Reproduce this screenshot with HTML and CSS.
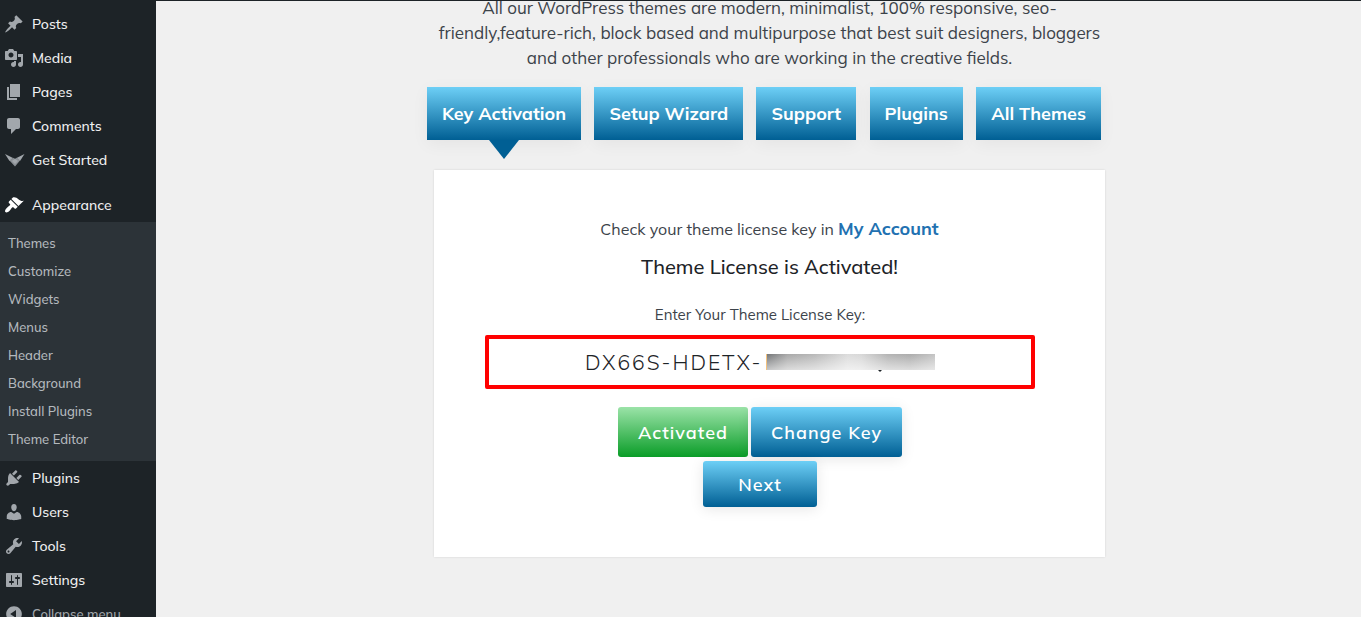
FILE: index.html
```
<!DOCTYPE html>
<html lang="en">
<head>
    <meta charset="UTF-8">
    <meta name="viewport" content="width=device-width, initial-scale=1.0">
    <title>Get Started</title>
    <link rel="stylesheet" href="styles.css">
</head>
<body>
    <nav class="admin-menu">
        <a href="#" class="menu-item">
            <svg viewBox="0 0 20 20"><path d="M10.44 3.02l1.82-1.82 6.36 6.35-1.83 1.82c-1.05-.68-2.48-.57-3.41.36l-.75.75c-.92.93-1.04 2.35-.35 3.41l-1.83 1.82-2.41-2.41-2.8 2.79c-.42.42-3.38 2.71-3.8 2.29s1.86-3.39 2.28-3.81l2.79-2.79L4.1 9.36l1.83-1.82c1.05.69 2.48.57 3.4-.36l.75-.75c.93-.92 1.05-2.35.36-3.41z"/></svg>
            <span>Posts</span>
        </a>
        <a href="#" class="menu-item">
            <svg viewBox="0 0 20 20"><path d="M13 11V4c0-.55-.45-1-1-1h-1.67L9 1H5L3.67 3H2c-.55 0-1 .45-1 1v7c0 .55.45 1 1 1h10c.55 0 1-.45 1-1zM7 4.5c1.38 0 2.5 1.12 2.5 2.5S8.38 9.5 7 9.5 4.5 8.38 4.5 7 5.62 4.5 7 4.5zM14 6h5v10.5c0 1.38-1.12 2.5-2.5 2.5S14 17.88 14 16.5s1.12-2.5 2.5-2.5c.17 0 .34.02.5.05V9h-3V6zm-4 8.05V13h2v3.5c0 1.38-1.12 2.5-2.5 2.5S7 17.88 7 16.5 8.12 14 9.5 14c.17 0 .34.02.5.05z"/></svg>
            <span>Media</span>
        </a>
        <a href="#" class="menu-item">
            <svg viewBox="0 0 20 20"><path d="M6 15V2h10v13H6zm-1 1h8v2H3V5h2v11z"/></svg>
            <span>Pages</span>
        </a>
        <a href="#" class="menu-item">
            <svg viewBox="0 0 20 20"><path d="M5 2h9c1.1 0 2 .9 2 2v7c0 1.1-.9 2-2 2h-2l-5 5v-5H5c-1.1 0-2-.9-2-2V4c0-1.1.9-2 2-2z"/></svg>
            <span>Comments</span>
        </a>
        <a href="#" class="menu-item">
            <svg viewBox="0 0 20 20"><path d="M1 4l8 4-3.500 3z"/><path d="M20.500 4l-8 4 3.500 3z"/><path d="M5.500 10.500L9 7.800l2 1 2-1 3 2.700-5 6z" fill="#8a8f94"/><path d="M8 11l3-2.200L14 11l-3 3z"/></svg>
            <span>Get Started</span>
        </a>
        <a href="#" class="menu-item current">
            <svg viewBox="0 0 20 20"><path d="M14.48 11.06L7.41 3.99l1.5-1.5c.5-.56 2.3-.47 3.51.32 1.21.8 1.43 1.28 2.91 2.1 1.18.64 2.45 1.26 4.45.85zm-.71.71L6.7 4.7 4.93 6.47c-.39.39-.39 1.02 0 1.41l1.06 1.06c.39.39.39 1.03 0 1.42-.6.6-1.43 1.11-2.21 1.69-.35.26-.7.53-1.01.84C1.43 14.23.4 16.08 1.4 17.07c.99 1 2.84-.03 4.18-1.36.31-.31.58-.66.85-1.02.57-.78 1.08-1.61 1.69-2.21.39-.39 1.02-.39 1.41 0l1.06 1.06c.39.39 1.02.39 1.41 0z"/></svg>
            <span>Appearance</span>
        </a>
        <div class="submenu">
            <a href="#">Themes</a>
            <a href="#">Customize</a>
            <a href="#">Widgets</a>
            <a href="#">Menus</a>
            <a href="#">Header</a>
            <a href="#">Background</a>
            <a href="#">Install Plugins</a>
            <a href="#">Theme Editor</a>
        </div>
        <a href="#" class="menu-item">
            <svg viewBox="0 0 20 20"><path d="M13.11 4.36L9.87 7.6 8 5.73l3.24-3.24c.35-.34 1.05-.2 1.56.32.52.51.66 1.21.31 1.55zm-8 1.77l.91-1.12 9.01 9.01-1.19.84c-.71.71-2.63 1.16-3.82 1.16H6.14L4.9 17.26c-.59.59-1.54.59-2.12 0-.59-.58-.59-1.53 0-2.12l1.24-1.24v-3.88c0-1.13.4-3.19 1.09-3.89zm7.26 3.97l3.24-3.24c.34-.35 1.04-.21 1.55.31.52.51.66 1.21.31 1.55l-3.24 3.25z"/></svg>
            <span>Plugins</span>
        </a>
        <a href="#" class="menu-item">
            <svg viewBox="0 0 20 20"><path d="M10 9.25c-2.27 0-2.73-3.44-2.73-3.44C7 4.02 7.82 2 9.97 2c2.16 0 2.98 2.02 2.71 3.81 0 0-.41 3.44-2.68 3.44zm0 2.57L12.72 10c2.39 0 4.52 2.33 4.52 4.53v2.49s-3.65 1.13-7.24 1.13c-3.65 0-7.24-1.13-7.24-1.13v-2.49c0-2.25 1.94-4.48 4.47-4.48z"/></svg>
            <span>Users</span>
        </a>
        <a href="#" class="menu-item">
            <svg viewBox="0 0 20 20"><path d="M16.68 9.77c-1.34 1.34-3.3 1.67-4.95.99l-5.41 6.52c-.99.99-2.59.99-3.58 0s-.99-2.59 0-3.57l6.52-5.42c-.68-1.65-.35-3.61.99-4.95 1.28-1.28 3.12-1.62 4.72-1.06l-2.89 2.89 2.82 2.82 2.86-2.87c.53 1.58.18 3.39-1.08 4.65zM3.81 16.21c.4.39 1.04.39 1.43 0 .4-.4.4-1.04 0-1.43-.39-.4-1.03-.4-1.43 0-.39.39-.39 1.03 0 1.43z"/></svg>
            <span>Tools</span>
        </a>
        <a href="#" class="menu-item">
            <svg viewBox="0 0 20 20"><path d="M18 16V4c0-.55-.45-1-1-1H3c-.55 0-1 .45-1 1v12c0 .55.45 1 1 1h14c.55 0 1-.45 1-1zM8 11h1c.55 0 1 .45 1 1s-.45 1-1 1H8v1.500c0 .28-.22.5-.5.5s-.5-.22-.5-.5V13H6c-.55 0-1-.45-1-1s.45-1 1-1h1V5.500c0-.28.22-.5.5-.5s.5.22.5.5V11zm5-2h-1c-.55 0-1-.45-1-1s.45-1 1-1h1V5.500c0-.28.22-.5.5-.5s.5.22.5.5V7h1c.55 0 1 .45 1 1s-.45 1-1 1h-1v5.500c0 .28-.22.5-.5.5s-.5-.22-.5-.5V9z"/></svg>
            <span>Settings</span>
        </a>
        <button type="button" class="menu-item collapse">
            <svg viewBox="0 0 20 20"><path d="M10 2.160c4.330 0 7.840 3.510 7.840 7.840s-3.510 7.840-7.840 7.840S2.160 14.330 2.160 10 5.710 2.160 10 2.160zm2 11.720V6.120L6.180 9.970z"/></svg>
            <span>Collapse menu</span>
        </button>
    </nav>

    <main>
        <div class="container">
            <p class="intro">
                All our WordPress themes are modern, minimalist, 100% responsive, seo-<br>
                friendly,feature-rich, block based and multipurpose that best suit designers, bloggers<br>
                and other professionals who are working in the creative fields.
            </p>

            <div class="tabs">
                <button type="button" class="tab active">Key Activation</button>
                <button type="button" class="tab">Setup Wizard</button>
                <button type="button" class="tab">Support</button>
                <button type="button" class="tab">Plugins</button>
                <button type="button" class="tab">All Themes</button>
            </div>

            <section class="card">
                <p class="account">Check your theme license key in <a href="#">My Account</a></p>
                <h3>Theme License is Activated!</h3>
                <form class="license-form">
                    <label for="license-key">Enter Your Theme License Key:</label>
                    <div class="key-box">
                        <input type="text" id="license-key" value="DX66S-HDETX-">
                        <span class="key-mask"></span>
                    </div>
                    <div class="buttons">
                        <button type="button" class="btn btn-green">Activated</button>
                        <button type="button" class="btn btn-change">Change Key</button>
                    </div>
                    <button type="button" class="btn btn-next">Next</button>
                </form>
            </section>
        </div>
    </main>
</body>
</html>
```
FILE: styles.css
```
* {
    box-sizing: border-box;
}
body {
    display: flex;
    height: 100vh;
    margin: 0;
    overflow: hidden;
    background: #f0f0f0;
    border-top: 1px solid #1d2327;
    color: #3c434a;
    font-family: Mulish, Muli, "Open Sans", sans-serif;
}
button, input {
    font-family: inherit;
}

/* sidebar */
.admin-menu {
    flex: 0 0 156px;
    padding-top: 6px;
    background: #1d2327;
}
.menu-item {
    display: flex;
    align-items: center;
    gap: 8px;
    width: 100%;
    height: 34px;
    padding: 0 4px;
    border: 0;
    background: none;
    color: #f0f0f1;
    font-size: 14px;
    font-weight: 500;
    text-decoration: none;
    white-space: nowrap;
}
.menu-item svg {
    flex: none;
    width: 20px;
    height: 20px;
    overflow: visible;
    fill: #a2a7ac;
}
.menu-item.current {
    margin-top: 11px;
}
.menu-item.current svg {
    fill: #fff;
}
.menu-item.collapse {
    color: #a2a7ac;
    font-size: 13px;
}
.submenu {
    padding: 7px 0 8px;
    background: #2c3338;
}
.submenu a {
    display: block;
    padding: 0 8px;
    color: #b4b9be;
    font-size: 13px;
    font-weight: 500;
    line-height: 28px;
    text-decoration: none;
}

/* content */
main {
    flex: 1;
    padding-left: 22px;
}
.container {
    width: 100%;
    max-width: 685px;
    margin: 0 auto;
}
.intro {
    margin: -6px 0 17px;
    font-size: 17px;
    line-height: 25px;
    text-align: center;
    white-space: nowrap;
}
.tabs {
    display: flex;
    justify-content: space-between;
    margin: 0 11px 30px 0;
}
.tab {
    position: relative;
    height: 53px;
    padding: 0 15px;
    border: 0;
    background: linear-gradient(#6dcff6, #005f94);
    box-shadow: 0 4px 16px rgba(0, 0, 0, 0.05);
    color: #fff;
    font-size: 18px;
    font-weight: 700;
    white-space: nowrap;
    cursor: pointer;
}
.tab.active::after {
    content: "";
    position: absolute;
    top: 100%;
    left: 50%;
    margin-left: -15px;
    border: 15px solid transparent;
    border-top: 19px solid #005f94;
    border-bottom: 0;
}
.card {
    margin: 0 7px;
    padding: 46px 0 50px;
    background: #fff;
    box-shadow: 0 0 2px rgba(0, 0, 0, 0.12);
    text-align: center;
}
.account {
    margin: 0;
    font-size: 16px;
    line-height: 26px;
}
.account a {
    color: #2271b1;
    font-size: 18px;
    font-weight: 700;
    text-decoration: none;
}
.card h3 {
    margin: 10px 0 20px;
    color: #1d2327;
    font-size: 20px;
    font-weight: 500;
    line-height: 30px;
}
.license-form {
    display: flex;
    flex-direction: column;
    align-items: center;
    padding-right: 19px;
}
.license-form label {
    font-size: 15px;
    line-height: 26px;
}
.key-box {
    display: flex;
    align-items: center;
    justify-content: center;
    width: 100%;
    max-width: 550px;
    height: 54px;
    margin: 7px 0 18px;
    border: 4px solid #f00;
    border-radius: 2px;
}
.key-box input {
    width: 181px;
    padding: 0;
    border: 0;
    outline: none;
    color: #1d2327;
    font-size: 21px;
    font-weight: 300;
    letter-spacing: 2px;
}
.key-mask {
    position: relative;
    width: 169px;
    height: 16px;
    border-left: 1px solid #f3c27e;
    background:
        linear-gradient(rgba(255, 255, 255, 0), rgba(255, 255, 255, 0.6)),
        linear-gradient(to right, #747678, #a8a8a8 12%, #b8b8b8 28%, #dcdcdc 48%, #d8d8d8 56%, #b4b4b4 72%, #acacac 85%, #c4c4c4);
}
/* tail of the hidden letter */
.key-mask::after {
    content: "";
    position: absolute;
    top: 100%;
    left: 66%;
    border: 2px solid transparent;
    border-top-color: #1d2327;
    border-bottom: 0;
}
.buttons {
    display: flex;
    gap: 3px;
    margin-bottom: 4px;
}
.btn {
    height: 50px;
    border: 0;
    border-radius: 3px;
    background: linear-gradient(#6dcff6, #005f94);
    box-shadow: 0 2px 14px rgba(0, 0, 0, 0.1);
    color: #fff;
    font-size: 18px;
    font-weight: 600;
    letter-spacing: 1px;
    cursor: pointer;
}
.btn-green {
    width: 130px;
    background: linear-gradient(#9be3a8, #0a9d28);
    box-shadow: none;
}
.btn-change {
    width: 151px;
}
.btn-next {
    width: 114px;
    height: 46px;
}
```
